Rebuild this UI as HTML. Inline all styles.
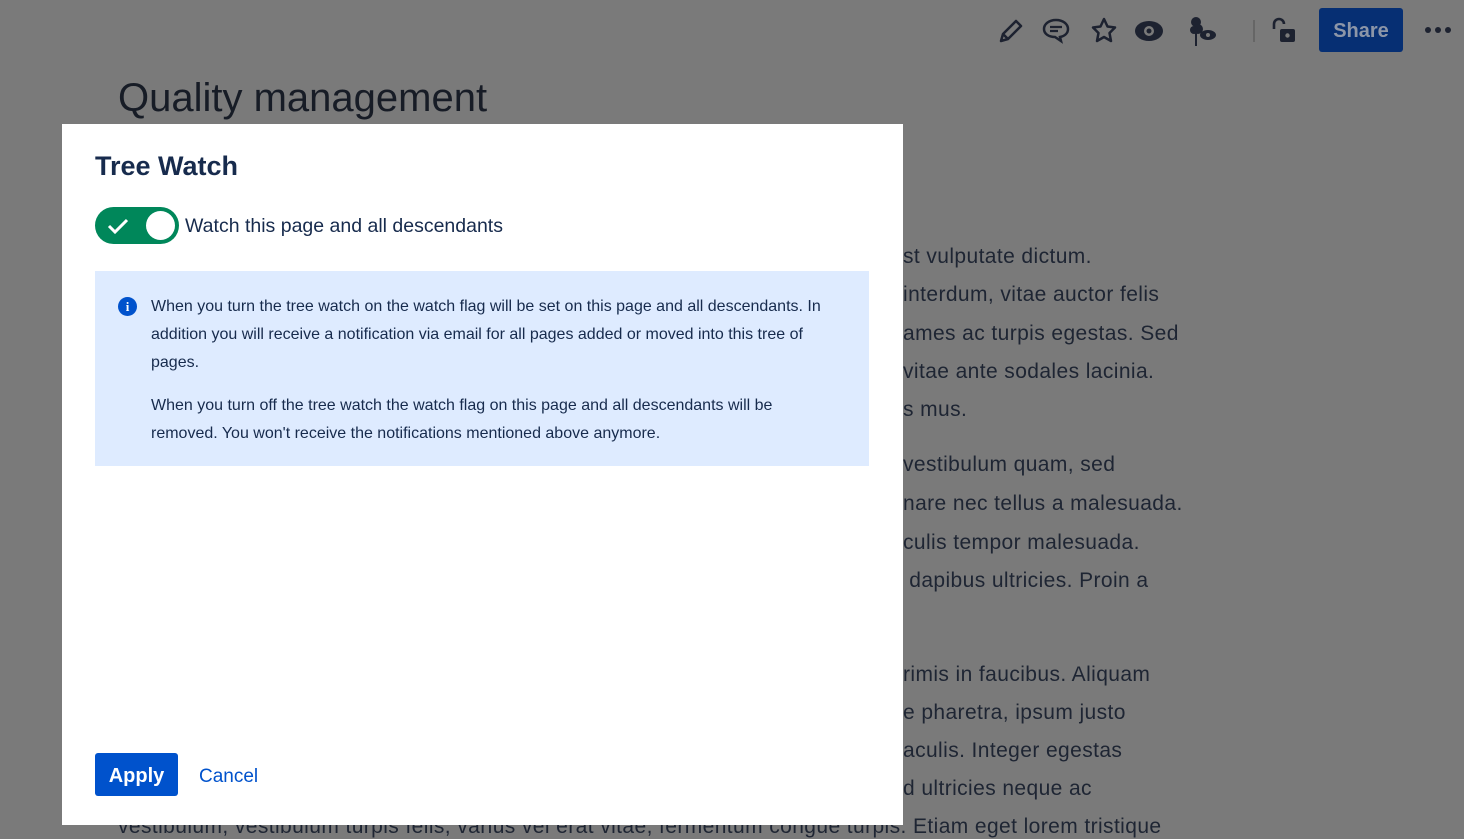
<!DOCTYPE html>
<html><head><meta charset="utf-8"><style>
*{margin:0;padding:0;box-sizing:border-box}
body{width:1464px;height:833px;overflow:hidden;background:#7a7a7a;font-family:"Liberation Sans",sans-serif;position:relative}
.bg{position:absolute;color:#1e2533;font-size:21px;letter-spacing:0.4px;white-space:nowrap}
.title{position:absolute;left:118px;top:76px;font-size:40px;color:#171c26}
.dlg{position:absolute;left:62px;top:124px;width:841px;height:701px;background:#fff}
.dlg h2{position:absolute;left:33px;top:27px;font-size:27px;font-weight:bold;color:#172b4d}
.tog{position:absolute;left:33px;top:83px;width:84px;height:37px;border-radius:19px;background:#00875a}
.tog .k{position:absolute;right:4px;top:4px;width:29px;height:29px;border-radius:50%;background:#fff}
.lbl{position:absolute;left:123px;top:91px;font-size:19.5px;color:#172b4d}
.info{position:absolute;left:33px;top:147px;width:774px;height:195px;background:#deebff;padding:22px 30px 0 56px;font-size:16px;line-height:28px;color:#172b4d}
.info p{margin-bottom:15px}
.ic{position:absolute;left:23px;top:26px;width:19px;height:19px;border-radius:50%;background:#0052cc;color:#fff;font-size:13px;font-weight:bold;text-align:center;line-height:19px;font-family:"Liberation Serif",serif}
.apply{position:absolute;left:33px;top:629px;width:83px;height:43px;background:#0052cc;border-radius:3px;color:#fff;font-weight:bold;font-size:20px;text-align:center;line-height:46px}
.cancel{position:absolute;left:137px;top:642px;font-size:19px;color:#0052cc}
.share{position:absolute;left:1319px;top:8px;width:84px;height:44px;background:#062f73;border-radius:3px;color:#8c96a8;font-weight:bold;font-size:20px;text-align:center;line-height:46px}
svg{position:absolute}
</style></head><body>
<div class="title">Quality management</div>
<div class="bg" style="left:903px;top:245px">st vulputate dictum.</div>
<div class="bg" style="left:903px;top:283px">interdum, vitae auctor felis</div>
<div class="bg" style="left:903px;top:322px">ames ac turpis egestas. Sed</div>
<div class="bg" style="left:903px;top:360px">vitae ante sodales lacinia.</div>
<div class="bg" style="left:903px;top:398px">s mus.</div>
<div class="bg" style="left:903px;top:453px">vestibulum quam, sed</div>
<div class="bg" style="left:903px;top:492px">nare nec tellus a malesuada.</div>
<div class="bg" style="left:903px;top:531px">culis tempor malesuada.</div>
<div class="bg" style="left:903px;top:569px">&nbsp;dapibus ultricies. Proin a</div>
<div class="bg" style="left:903px;top:663px">rimis in faucibus. Aliquam</div>
<div class="bg" style="left:903px;top:701px">e pharetra, ipsum justo</div>
<div class="bg" style="left:903px;top:739px">aculis. Integer egestas</div>
<div class="bg" style="left:903px;top:777px">d ultricies neque ac</div>
<div class="bg" style="left:118px;top:815px">vestibulum, vestibulum turpis felis, varius vel erat vitae, fermentum congue turpis. Etiam eget lorem tristique</div>

<svg style="left:996px;top:16px" width="30" height="30" viewBox="0 0 30 30"><path d="M5 25 L7 18 L20 5 L25 10 L12 23 Z M7 18 L12 23" fill="none" stroke="#1d2230" stroke-width="2.5" stroke-linejoin="round"/></svg>
<svg style="left:1041px;top:16px" width="30" height="30" viewBox="0 0 30 30"><path d="M15 4 C8 4 3 8 3 13 C3 18 8 21 14 21 L20 25 L19 21 C24 20 27 17 27 13 C27 8 22 4 15 4 Z" fill="none" stroke="#1d2230" stroke-width="2.5"/><path d="M9 11 H21 M9 15 H17" stroke="#1d2230" stroke-width="2.2"/></svg>
<svg style="left:1089px;top:16px" width="30" height="30" viewBox="0 0 30 30"><path d="M15 3 L18.5 10.5 L26 11.5 L20.5 17 L22 25 L15 21 L8 25 L9.5 17 L4 11.5 L11.5 10.5 Z" fill="none" stroke="#1d2230" stroke-width="2.5" stroke-linejoin="round"/></svg>
<svg style="left:1133px;top:16px" width="32" height="30" viewBox="0 0 32 30"><ellipse cx="16" cy="15" rx="14" ry="10" fill="#1d2230"/><circle cx="16" cy="15" r="5" fill="#7a7a7a"/><circle cx="16" cy="15" r="2.5" fill="#1d2230"/></svg>
<svg style="left:1186px;top:16px" width="34" height="32" viewBox="0 0 34 32"><circle cx="10" cy="6" r="5" fill="#1d2230"/><circle cx="12" cy="13" r="5" fill="#1d2230"/><circle cx="8" cy="14" r="4" fill="#1d2230"/><rect x="9" y="14" width="2" height="16" fill="#1d2230"/><ellipse cx="22" cy="19" rx="8" ry="5" fill="#1d2230"/><circle cx="22" cy="19" r="2" fill="#7a7a7a"/></svg>
<div style="position:absolute;left:1253px;top:20px;width:2px;height:22px;background:#666"></div>
<svg style="left:1270px;top:16px" width="28" height="30" viewBox="0 0 28 30"><path d="M4 13 V8 A5 5 0 0 1 14 8" fill="none" stroke="#1d2230" stroke-width="2.6"/><rect x="10" y="13" width="15" height="13" rx="2" fill="#1d2230"/><circle cx="17.5" cy="19.5" r="2.2" fill="#7a7a7a"/></svg>
<div class="share">Share</div>
<div style="position:absolute;left:1425px;top:27px;font-size:0">
<span style="display:inline-block;width:6px;height:6px;border-radius:50%;background:#1d2230;margin-right:4px"></span><span style="display:inline-block;width:6px;height:6px;border-radius:50%;background:#1d2230;margin-right:4px"></span><span style="display:inline-block;width:6px;height:6px;border-radius:50%;background:#1d2230"></span></div>

<div class="dlg">
<h2>Tree Watch</h2>
<div class="tog"><svg style="left:12px;top:10px" width="22" height="18" viewBox="0 0 22 18"><path d="M2 9 L8 15 L20 3" fill="none" stroke="#fff" stroke-width="3"/></svg><div class="k"></div></div>
<div class="lbl">Watch this page and all descendants</div>
<div class="info"><div class="ic">i</div>
<p>When you turn the tree watch on the watch flag will be set on this page and all descendants. In addition you will receive a notification via email for all pages added or moved into this tree of pages.</p>
<p>When you turn off the tree watch the watch flag on this page and all descendants will be<br>removed. You won't receive the notifications mentioned above anymore.</p>
</div>
<div class="apply">Apply</div>
<div class="cancel">Cancel</div>
</div>
</body></html>
